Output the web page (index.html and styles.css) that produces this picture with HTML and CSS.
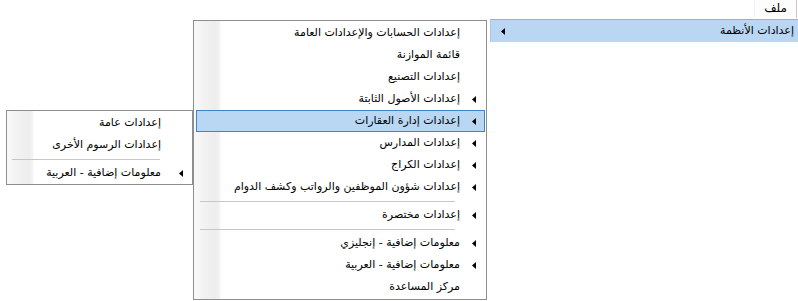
FILE: index.html
```html
<!DOCTYPE html>
<html lang="ar">
<head>
<meta charset="utf-8">
<link rel="stylesheet" href="styles.css">
</head>
<body>
<div class="screen">
  <div class="menubar" dir="rtl">
    <div class="tab">ملف</div>
  </div>

  <div class="open-item" dir="rtl">
    <span class="label">إعدادات الأنظمة</span>
    <svg class="arrow" width="4" height="7" viewBox="0 0 4 7"><polygon points="4,0 4,7 0,3.5" fill="#000"/></svg>
  </div>

  <div class="menu main-menu" dir="rtl">
    <div class="item"><span class="arrow-slot"></span><span class="label">إعدادات الحسابات والإعدادات العامة</span></div>
    <div class="item"><span class="arrow-slot"></span><span class="label">قائمة الموازنة</span></div>
    <div class="item"><span class="arrow-slot"></span><span class="label">إعدادات التصنيع</span></div>
    <div class="item"><span class="arrow-slot"><svg width="4" height="7" viewBox="0 0 4 7"><polygon points="4,0 4,7 0,3.5" fill="#000"/></svg></span><span class="label">إعدادات الأصول الثابتة</span></div>
    <div class="item active"><span class="arrow-slot"><svg width="4" height="7" viewBox="0 0 4 7"><polygon points="4,0 4,7 0,3.5" fill="#000"/></svg></span><span class="label">إعدادات إدارة العقارات</span></div>
    <div class="item"><span class="arrow-slot"><svg width="4" height="7" viewBox="0 0 4 7"><polygon points="4,0 4,7 0,3.5" fill="#000"/></svg></span><span class="label">إعدادات المدارس</span></div>
    <div class="item"><span class="arrow-slot"><svg width="4" height="7" viewBox="0 0 4 7"><polygon points="4,0 4,7 0,3.5" fill="#000"/></svg></span><span class="label">إعدادات الكراج</span></div>
    <div class="item"><span class="arrow-slot"><svg width="4" height="7" viewBox="0 0 4 7"><polygon points="4,0 4,7 0,3.5" fill="#000"/></svg></span><span class="label">إعدادات شؤون الموظفين والرواتب وكشف الدوام</span></div>
    <div class="sep"></div>
    <div class="item"><span class="arrow-slot"><svg width="4" height="7" viewBox="0 0 4 7"><polygon points="4,0 4,7 0,3.5" fill="#000"/></svg></span><span class="label">إعدادات مختصرة</span></div>
    <div class="sep"></div>
    <div class="item"><span class="arrow-slot"><svg width="4" height="7" viewBox="0 0 4 7"><polygon points="4,0 4,7 0,3.5" fill="#000"/></svg></span><span class="label">معلومات إضافية - إنجليزي</span></div>
    <div class="item"><span class="arrow-slot"><svg width="4" height="7" viewBox="0 0 4 7"><polygon points="4,0 4,7 0,3.5" fill="#000"/></svg></span><span class="label">معلومات إضافية - العربية</span></div>
    <div class="item"><span class="arrow-slot"></span><span class="label">مركز المساعدة</span></div>
  </div>

  <div class="menu sub-menu" dir="rtl">
    <div class="item"><span class="arrow-slot"></span><span class="label">إعدادات عامة</span></div>
    <div class="item"><span class="arrow-slot"></span><span class="label">إعدادات الرسوم الأخرى</span></div>
    <div class="sep"></div>
    <div class="item"><span class="arrow-slot"><svg width="4" height="7" viewBox="0 0 4 7"><polygon points="4,0 4,7 0,3.5" fill="#000"/></svg></span><span class="label">معلومات إضافية - العربية</span></div>
  </div>
</div>
</body>
</html>
```

FILE: styles.css
```css
* { box-sizing: border-box; }
html, body { margin: 0; padding: 0; background: #fff; }
body {
  font-family: "DejaVu Sans", sans-serif;
  font-size: 11px;
  color: #000;
}
.screen {
  position: relative;
  width: 798px;
  height: 301px;
  overflow: hidden;
  background: #fff;
}
.menubar {
  display: flex;
  height: 19px;
  padding-right: 1px;
}
.tab {
  height: 18px;
  line-height: 17px;
  font-size: 12px;
  padding: 0 9px 0 9px;
  border-left: 1px solid #f0f0f0;
  border-right: 1px solid #c9c9c9;
  background: #fdfdfd;
}
.open-item {
  position: absolute;
  left: 490px;
  top: 19px;
  width: 308px;
  height: 23px;
  display: flex;
  align-items: center;
  justify-content: space-between;
  padding: 0 4px 0 10px;
  background: #b9d7f3;
  border-top: 1px solid #8db4de;
  border-left: 1px solid #a9c8e8;
}
.menu {
  position: absolute;
  background-color: #fff;
  background-image: linear-gradient(to right, #f9f9f9 0, #f2f2f2 10px, #ededed 22px, #f5f5f5 26px, #fff 27px);
  background-repeat: no-repeat;
  background-size: 28px 100%;
  background-position: left top;
  border: 1px solid #8e8e8e;
  padding: 1px 1px 1px 2px;
}
.main-menu {
  left: 193px;
  top: 20px;
  width: 294px;
  height: 280px;
}
.sub-menu {
  left: 6px;
  top: 110px;
  width: 187px;
  height: 75px;
}
.item {
  height: 22px;
  display: grid;
  grid-template-columns: 24px 1fr;
  align-items: center;
  border: 1px solid transparent;
}
.sub-menu .item { grid-template-columns: 29px 1fr; }
.item.active {
  background: #b9d7f3;
  border-color: #3f83c9;
}
.arrow-slot {
  display: flex;
  align-items: center;
  justify-content: flex-start;
  padding-right: 8px;
  height: 7px;
}
.sub-menu .arrow-slot { padding-right: 7px; }
.arrow-slot svg { display: block; }
.label {
  white-space: nowrap;
  line-height: 14px;
}
.sep {
  height: 6px;
  display: flex;
  align-items: center;
  padding: 0 30px 0 4px;
}
.sep::before {
  content: "";
  flex: 1;
  height: 1px;
  background: #c6c6c6;
}
.sub-menu .sep { padding: 0 31px 0 3px; }
```
